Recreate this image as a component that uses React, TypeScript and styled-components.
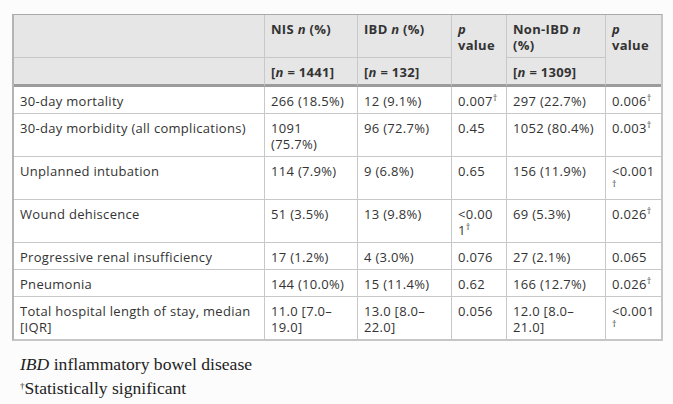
import React from 'react'
import styled, { createGlobalStyle } from 'styled-components'

const GlobalStyle = createGlobalStyle`
  html, body {
    margin: 0;
    background: #fcfcfc;
  }
`

const Page = styled.div`
  padding: 14px 10px 0 12px;
  font-family: 'Open Sans', 'Noto Sans', sans-serif;
  color: #333;
`

const Table = styled.table`
  border-collapse: separate;
  border-spacing: 0;
  table-layout: fixed;
  width: 651px;
  border-top: 1px solid #a9a9a9;
  border-left: 2px solid #b4b4b4;
  border-right: 2px solid #c6c6c6;
  border-bottom: 2px solid #c6c6c6;
  background: #fff;
  font-size: 13px;
  letter-spacing: 0.3px;
  line-height: 16px;
`

const Th = styled.th<{ $last?: boolean; $sep?: boolean }>`
  background: #e6e6e6;
  text-align: left;
  vertical-align: top;
  font-weight: bold;
  padding: 6px 6px 4px;
  border-right: ${({ $last }) => ($last ? 'none' : '1px solid #c8c8c8')};
  border-bottom: ${({ $sep }) => ($sep ? '3px solid #9c9c9c' : '1px solid #c8c8c8')};
  overflow-wrap: anywhere;
`

const Td = styled.td<{ $last?: boolean; $end?: boolean }>`
  text-align: left;
  vertical-align: top;
  padding: 6px 6px 4px;
  border-right: ${({ $last }) => ($last ? 'none' : '1px solid #c8c8c8')};
  border-bottom: ${({ $end }) => ($end ? 'none' : '1px solid #c8c8c8')};
  overflow-wrap: anywhere;
`

const Sup = styled.sup`
  font-size: 9px;
  line-height: 0;
  vertical-align: 5px;
`

const Notes = styled.div`
  margin-top: 11px;
  padding-left: 8px;
  font-family: 'Liberation Serif', 'Times New Roman', serif;
  font-size: 17.6px;
  line-height: 24px;
  color: #222;
`

const Note = styled.div``

type Cell = [string, boolean?]

const rows: { label: string; cells: Cell[] }[] = [
  { label: '30-day mortality', cells: [['266 (18.5%)'], ['12 (9.1%)'], ['0.007', true], ['297 (22.7%)'], ['0.006', true]] },
  { label: '30-day morbidity (all complications)', cells: [['1091 (75.7%)'], ['96 (72.7%)'], ['0.45'], ['1052 (80.4%)'], ['0.003', true]] },
  { label: 'Unplanned intubation', cells: [['114 (7.9%)'], ['9 (6.8%)'], ['0.65'], ['156 (11.9%)'], ['<0.001', true]] },
  { label: 'Wound dehiscence', cells: [['51 (3.5%)'], ['13 (9.8%)'], ['<0.001', true], ['69 (5.3%)'], ['0.026', true]] },
  { label: 'Progressive renal insufficiency', cells: [['17 (1.2%)'], ['4 (3.0%)'], ['0.076'], ['27 (2.1%)'], ['0.065']] },
  { label: 'Pneumonia', cells: [['144 (10.0%)'], ['15 (11.4%)'], ['0.62'], ['166 (12.7%)'], ['0.026', true]] },
  { label: 'Total hospital length of stay, median [IQR]', cells: [['11.0 [7.0–19.0]'], ['13.0 [8.0–22.0]'], ['0.056'], ['12.0 [8.0–21.0]'], ['<0.001', true]] },
]

const widths = [251, 93, 94, 55, 99, 55]

export default function App() {
  return (
    <Page>
      <GlobalStyle />
      <Table>
        <colgroup>
          {widths.map((w, i) => (
            <col key={i} style={{ width: w }} />
          ))}
        </colgroup>
        <thead>
          <tr>
            <Th />
            <Th>
              NIS <i>n</i> (%)
            </Th>
            <Th>
              IBD <i>n</i> (%)
            </Th>
            <Th rowSpan={2} $sep>
              <i>p</i> value
            </Th>
            <Th>
              Non-IBD <i>n</i> (%)
            </Th>
            <Th rowSpan={2} $sep $last>
              <i>p</i> value
            </Th>
          </tr>
          <tr>
            <Th $sep />
            <Th $sep>
              [<i>n</i> = 1441]
            </Th>
            <Th $sep>
              [<i>n</i> = 132]
            </Th>
            <Th $sep>
              [<i>n</i> = 1309]
            </Th>
          </tr>
        </thead>
        <tbody>
          {rows.map((r, ri) => {
            const end = ri === rows.length - 1
            return (
              <tr key={r.label}>
                <Td $end={end}>{r.label}</Td>
                {r.cells.map(([v, sig], ci) => (
                  <Td key={ci} $end={end} $last={ci === r.cells.length - 1}>
                    {v}
                    {sig && <Sup>†</Sup>}
                  </Td>
                ))}
              </tr>
            )
          })}
        </tbody>
      </Table>
      <Notes>
        <Note>
          <i>IBD</i> inflammatory bowel disease
        </Note>
        <Note>
          <Sup>†</Sup>Statistically significant
        </Note>
      </Notes>
    </Page>
  )
}
